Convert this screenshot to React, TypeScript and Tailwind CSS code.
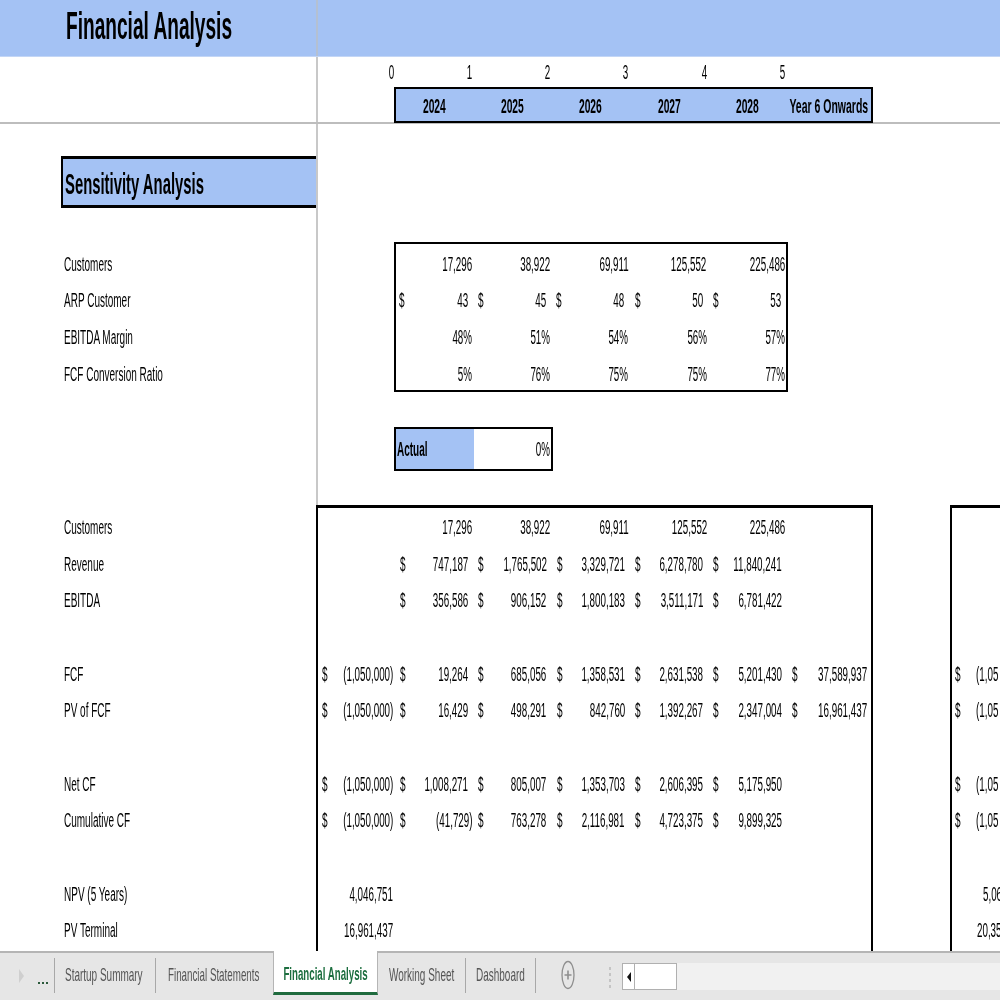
import React from 'react';
import { twMerge } from 'tailwind-merge';

const years = ['2024', '2025', '2026', '2027', '2028'];

const sensitivity = [
  { label: 'Customers', values: ['17,296', '38,922', '69,911', '125,552', '225,486'] },
  { label: 'ARP Customer', values: ['$ 43', '$ 45', '$ 48', '$ 50', '$ 53'] },
  { label: 'EBITDA Margin', values: ['48%', '51%', '54%', '56%', '57%'] },
  { label: 'FCF Conversion Ratio', values: ['5%', '76%', '75%', '75%', '77%'] },
];

const mainRows: { label: string; values: string[] }[] = [
  { label: 'Customers', values: ['', '17,296', '38,922', '69,911', '125,552', '225,486', ''] },
  { label: 'Revenue', values: ['', '$ 747,187', '$ 1,765,502', '$ 3,329,721', '$ 6,278,780', '$ 11,840,241', ''] },
  { label: 'EBITDA', values: ['', '$ 356,586', '$ 906,152', '$ 1,800,183', '$ 3,511,171', '$ 6,781,422', ''] },
  { label: '', values: [] },
  { label: 'FCF', values: ['$ (1,050,000)', '$ 19,264', '$ 685,056', '$ 1,358,531', '$ 2,631,538', '$ 5,201,430', '$ 37,589,937'] },
  { label: 'PV of FCF', values: ['$ (1,050,000)', '$ 16,429', '$ 498,291', '$ 842,760', '$ 1,392,267', '$ 2,347,004', '$ 16,961,437'] },
  { label: '', values: [] },
  { label: 'Net CF', values: ['$ (1,050,000)', '$ 1,008,271', '$ 805,007', '$ 1,353,703', '$ 2,606,395', '$ 5,175,950', ''] },
  { label: 'Cumulative CF', values: ['$ (1,050,000)', '$ (41,729)', '$ 763,278', '$ 2,116,981', '$ 4,723,375', '$ 9,899,325', ''] },
  { label: '', values: [] },
  { label: 'NPV (5 Years)', values: ['4,046,751'] },
  { label: 'PV Terminal', values: ['16,961,437'] },
];

const secondBox = [
  null, null, null, null,
  { dollar: true, text: '(1,05' },
  { dollar: true, text: '(1,05' },
  null,
  { dollar: true, text: '(1,05' },
  { dollar: true, text: '(1,05' },
  null,
  { dollar: false, text: '5,06', indent: 'pl-[31px]' },
  { dollar: false, text: '20,35', indent: 'pl-[25px]' },
];

// text in the sheet is squeezed horizontally, like a stretched screenshot
const Squeezed = ({ children, className }: { children: React.ReactNode; className?: string }) => (
  <span className={twMerge('inline-block whitespace-nowrap scale-x-[0.49] blur-[0.25px]', className)}>{children}</span>
);

const Label = ({ text }: { text: string }) => (
  <div className="h-[36.67px] flex items-center pl-[64px] text-[20px]">
    <Squeezed className="origin-left scale-x-[0.5]">{text}</Squeezed>
  </div>
);

const Cell = ({ value, dollarPad = 'pl-[5px]', endPad }: { value: string; dollarPad?: string; endPad?: string }) => {
  const hasDollar = value.startsWith('$ ');
  const text = hasDollar ? value.slice(2) : value;
  const pad = endPad ?? (hasDollar && !text.endsWith(')') ? 'pr-[5px]' : 'pr-[1px]');
  return (
    <div className={twMerge('h-[36.67px] flex items-center text-[20px]', dollarPad, pad)}>
      {hasDollar && <Squeezed className="origin-left shrink-0 scale-x-[0.5]">$</Squeezed>}
      <div className="flex-1 min-w-0 flex justify-end">
        <Squeezed className="origin-right shrink-0">{text}</Squeezed>
      </div>
    </div>
  );
};

const TopBand = () => (
  <div className="flex h-[57px] bg-[#a4c2f4] border-b border-[#c3d6f6]">
    <div className="w-[318px] shrink-0 border-r-2 border-[#b4c0d2] flex items-center pl-[66px] pb-[3px]">
      <Squeezed className="origin-left text-[39px] font-bold scale-x-[0.49]">Financial Analysis</Squeezed>
    </div>
  </div>
);

const YearHeader = () => (
  <div className="flex h-[67px] border-b-2 border-[#bdbdbd]">
    <div className="w-[318px] shrink-0 border-r-2 border-[#c8c8c8]" />
    <div className="pl-[76px] flex flex-col">
      <div className="h-[31px] flex items-center -ml-[77px]">
        {[0, 1, 2, 3, 4, 5].map((n) => (
          <div key={n} className="w-[78.25px] shrink-0 flex justify-end text-[20px] pr-[1.5px]">
            <Squeezed className="origin-right">{n}</Squeezed>
          </div>
        ))}
      </div>
      <div className="w-[479px] h-[36px] border-[2.5px] border-black bg-[#a4c2f4] flex items-center pt-[2px] text-[21px] font-bold">
        {years.map((y) => (
          <div key={y} className="w-[78.25px] shrink-0 flex justify-center -translate-x-[1px]">
            <Squeezed>{y}</Squeezed>
          </div>
        ))}
        <div className="flex-1 min-w-0 flex justify-center">
          <Squeezed className="shrink-0 scale-x-[0.5]">Year 6 Onwards</Squeezed>
        </div>
      </div>
    </div>
  </div>
);

const SensitivitySection = () => (
  <div className="flex h-[381px]">
    <div className="w-[318px] shrink-0 border-r-2 border-[#c8c8c8] pt-[32px]">
      <div className="ml-[61px] h-[52px] border-y-[3px] border-l-[2.5px] border-black bg-[#a4c2f4] flex items-center pl-[2px] pt-[2px]">
        <Squeezed className="origin-left text-[30px] font-bold scale-x-[0.495]">Sensitivity Analysis</Squeezed>
      </div>
      <div className="pt-[37.5px]">
        {sensitivity.map((r) => (
          <Label key={r.label} text={r.label} />
        ))}
      </div>
    </div>
    <div className="pl-[76px] pt-[118px]">
      <div className="w-[394px] h-[150px] border-[2.5px] border-black py-[1.5px]">
        {sensitivity.map((r) => (
          <div key={r.label} className="grid grid-cols-[77px_78.25px_78.25px_78.25px_78.25px]">
            {r.values.map((v, i) => (
              <Cell key={i} value={v} dollarPad={i === 0 ? 'pl-[3px]' : 'pl-[5px]'} />
            ))}
          </div>
        ))}
      </div>
      <div className="mt-[35px] w-[158.5px] h-[44px] border-[2.5px] border-black flex text-[20px]">
        <div className="w-[78px] bg-[#a4c2f4] flex items-center pl-[1px]">
          <Squeezed className="origin-left font-bold scale-x-[0.5]">Actual</Squeezed>
        </div>
        <div className="flex-1 flex items-center justify-end pr-[1px]">
          <Squeezed className="origin-right">0%</Squeezed>
        </div>
      </div>
    </div>
  </div>
);

const MainSection = () => (
  <div className="flex">
    <div className="w-[316px] shrink-0 pt-[3.7px]">
      {mainRows.map((r, i) => (r.label ? <Label key={i} text={r.label} /> : <div key={i} className="h-[36.67px]" />))}
    </div>
    <div className="w-[557px] shrink-0 h-[480px] border-t-[3px] border-x-2 border-black pt-[0.7px]">
      {mainRows.map((r, i) => (
        <div key={i} className="h-[36.67px] grid grid-cols-[77px_78.33px_78.33px_78.33px_78.33px_78.33px_84px]">
          {r.values.map((v, j) => (
            <Cell
              key={j}
              value={v}
              dollarPad={j === 0 ? 'pl-[4px]' : 'pl-[5px]'}
              endPad={j === 0 ? 'pr-[2px]' : j === 6 ? 'pr-[4px]' : undefined}
            />
          ))}
        </div>
      ))}
    </div>
    <div className="ml-[77px] flex-1 h-[480px] border-t-[3px] border-l-2 border-black pt-[0.7px] overflow-hidden text-[20px]">
      {secondBox.map((r, i) => (
        <div key={i} className={twMerge('h-[36.67px] flex items-center', r?.indent)}>
          {r?.dollar && (
            <div className="w-[24px] pl-[3px] shrink-0">
              <Squeezed className="origin-left scale-x-[0.5]">$</Squeezed>
            </div>
          )}
          {r && <Squeezed className="origin-left">{r.text}</Squeezed>}
        </div>
      ))}
    </div>
  </div>
);

const SheetTab = ({ name, className, squeeze }: { name: string; className: string; squeeze?: string }) => (
  <div className={twMerge('shrink-0 h-[35px] mt-[5px] flex items-center border-r border-[#a8a8a8] text-[19px] text-[#555]', className)}>
    <Squeezed className={twMerge('origin-left scale-x-[0.525]', squeeze)}>{name}</Squeezed>
  </div>
);

const TabBar = () => (
  <div className="h-[49px] shrink-0 bg-[#e6e6e6] border-t-2 border-[#b5b5b5] flex">
    <div className="w-[55px] shrink-0 h-[35px] mt-[5px] border-r border-[#a8a8a8] flex items-center pl-[19px]">
      <svg width="5" height="14" viewBox="0 0 5 14" className="shrink-0">
        <path d="M0 0 L5 7 L0 14 Z" fill="#cfcfcf" />
      </svg>
      <span className="ml-[14px] mt-[14px] flex gap-[2px]">
        <i className="w-[2px] h-[2px] bg-[#2b5a3c]" />
        <i className="w-[2px] h-[2px] bg-[#2b5a3c]" />
        <i className="w-[2px] h-[2px] bg-[#2b5a3c]" />
      </span>
    </div>
    <SheetTab name="Startup Summary" className="w-[101px] pl-[10px]" />
    <SheetTab name="Financial Statements" className="w-[117px] pl-[12px] border-r-0" squeeze="scale-x-[0.515]" />
    <div className="w-[105px] shrink-0 -mt-[2px] h-[44px] pt-[6px] bg-white border-x border-[#b5b5b5] border-b-[3px] border-b-[#1f6b3e] flex items-center justify-center text-[19px] font-bold text-[#1c6e3f]">
      <Squeezed className="scale-x-[0.51]">Financial Analysis</Squeezed>
    </div>
    <SheetTab name="Working Sheet" className="w-[88px] pl-[11px]" />
    <SheetTab name="Dashboard" className="w-[70px] pl-[10px]" />
    <div className="w-[73px] shrink-0 flex pt-[7px] pl-[25px]">
      <svg width="14" height="30" viewBox="0 0 14 30" className="shrink-0">
        <ellipse cx="7" cy="15" rx="6" ry="13.5" fill="none" stroke="#8f8f8f" strokeWidth="1.3" />
        <path d="M3.5 15 H10.5 M7 10.5 V19.5" stroke="#8f8f8f" strokeWidth="1.6" />
      </svg>
    </div>
    <div className="w-[13px] shrink-0 pt-[14px] flex flex-col gap-[3px] items-start">
      <i className="w-[1.5px] h-[3px] bg-[#c4c4c4]" />
      <i className="w-[1.5px] h-[3px] bg-[#c4c4c4]" />
      <i className="w-[1.5px] h-[3px] bg-[#c4c4c4]" />
      <i className="w-[1.5px] h-[3px] bg-[#c4c4c4]" />
    </div>
    <div className="flex-1 mt-[10px] h-[27px] bg-[#f1f1f1] flex">
      <div className="w-[13px] h-full bg-white border border-[#b0b0b0] flex items-center justify-center">
        <svg width="4" height="10" viewBox="0 0 4 10">
          <path d="M4 0 L0 5 L4 10 Z" fill="#111" />
        </svg>
      </div>
      <div className="w-[42px] h-full bg-white border border-l-0 border-[#b0b0b0]" />
    </div>
  </div>
);

export default function App() {
  return (
    <div className="w-[1000px] h-[1000px] flex flex-col overflow-hidden bg-white text-black font-['Liberation_Sans',sans-serif]">
      <div className="flex-1 min-h-0 overflow-hidden">
        <TopBand />
        <YearHeader />
        <SensitivitySection />
        <MainSection />
      </div>
      <TabBar />
    </div>
  );
}
